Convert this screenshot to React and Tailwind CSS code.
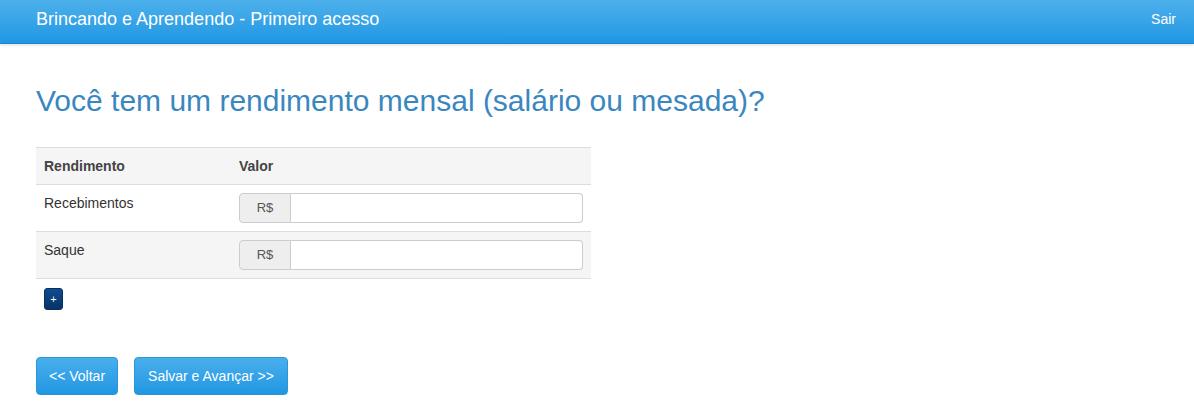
export default function App() {
  const font = { fontFamily: '"Liberation Sans", Arial, sans-serif' };
  return (
    <div className="min-h-[415px] bg-white text-[14px] leading-[20px] text-[#333]" style={font}>
      <div className="h-[44px] bg-gradient-to-b from-[#4cb0eb] to-[#1d97e3] border-b border-[#1a86cf] shadow-[0_1px_3px_rgba(0,0,0,0.15)] flex items-center justify-between pl-[36px] pr-[18px]">
        <span className="text-white text-[18px] leading-[20px] -mt-[5px]">Brincando e Aprendendo - Primeiro acesso</span>
        <span className="text-white text-[14px] -mt-[6px]">Sair</span>
      </div>
      <div className="px-[36px]">
        <h2 className="text-[30px] leading-[33px] text-[#3a87c0] mt-[40px] mb-[30px] font-normal">Você tem um rendimento mensal (salário ou mesada)?</h2>
        <table className="w-[555px] border-collapse">
          <thead>
            <tr className="bg-[#f5f5f5] border-t border-b border-[#ddd]">
              <th className="text-left font-bold px-[8px] py-[8px] w-[195px] leading-[20px] text-[#444]">Rendimento</th>
              <th className="text-left font-bold px-[8px] py-[8px] leading-[20px] text-[#444]">Valor</th>
            </tr>
          </thead>
          <tbody>
            {["Recebimentos", "Saque"].map((label, i) => (
              <tr key={label} className={(i % 2 ? "bg-[#f5f5f5]" : "bg-white") + " border-b border-[#ddd]"}>
                <td className="align-top px-[8px] pt-[8px] pb-[8px]">{label}</td>
                <td className="align-top px-[8px] py-[8px]">
                  <div className="flex h-[30px] w-[344px]">
                    <span className="w-[52px] flex items-center justify-center bg-[#eee] border border-[#ccc] rounded-l-[4px] text-[13px] text-[#555]">R$</span>
                    <input className="flex-1 bg-white border border-l-0 border-[#ccc] rounded-r-[4px] outline-none px-[10px]" />
                  </div>
                </td>
              </tr>
            ))}
          </tbody>
        </table>
        <div className="pl-[8px] pt-[9px]">
          <button className="w-[19px] h-[22px] rounded-[3px] bg-gradient-to-b from-[#0f4c8f] to-[#073367] border border-[#06305f] text-white text-[11px] leading-[12px] flex items-center justify-center">+</button>
        </div>
        <div className="flex gap-[16px] mt-[47px]">
          <button className="h-[38px] px-[12px] whitespace-nowrap rounded-[4px] bg-gradient-to-b from-[#48afec] to-[#1f97e3] border border-[#2a95d9] text-white text-[14px]">&lt;&lt; Voltar</button>
          <button className="h-[38px] px-[13px] whitespace-nowrap rounded-[4px] bg-gradient-to-b from-[#48afec] to-[#1f97e3] border border-[#2a95d9] text-white text-[14px]">Salvar e Avançar &gt;&gt;</button>
        </div>
      </div>
    </div>
  );
}
